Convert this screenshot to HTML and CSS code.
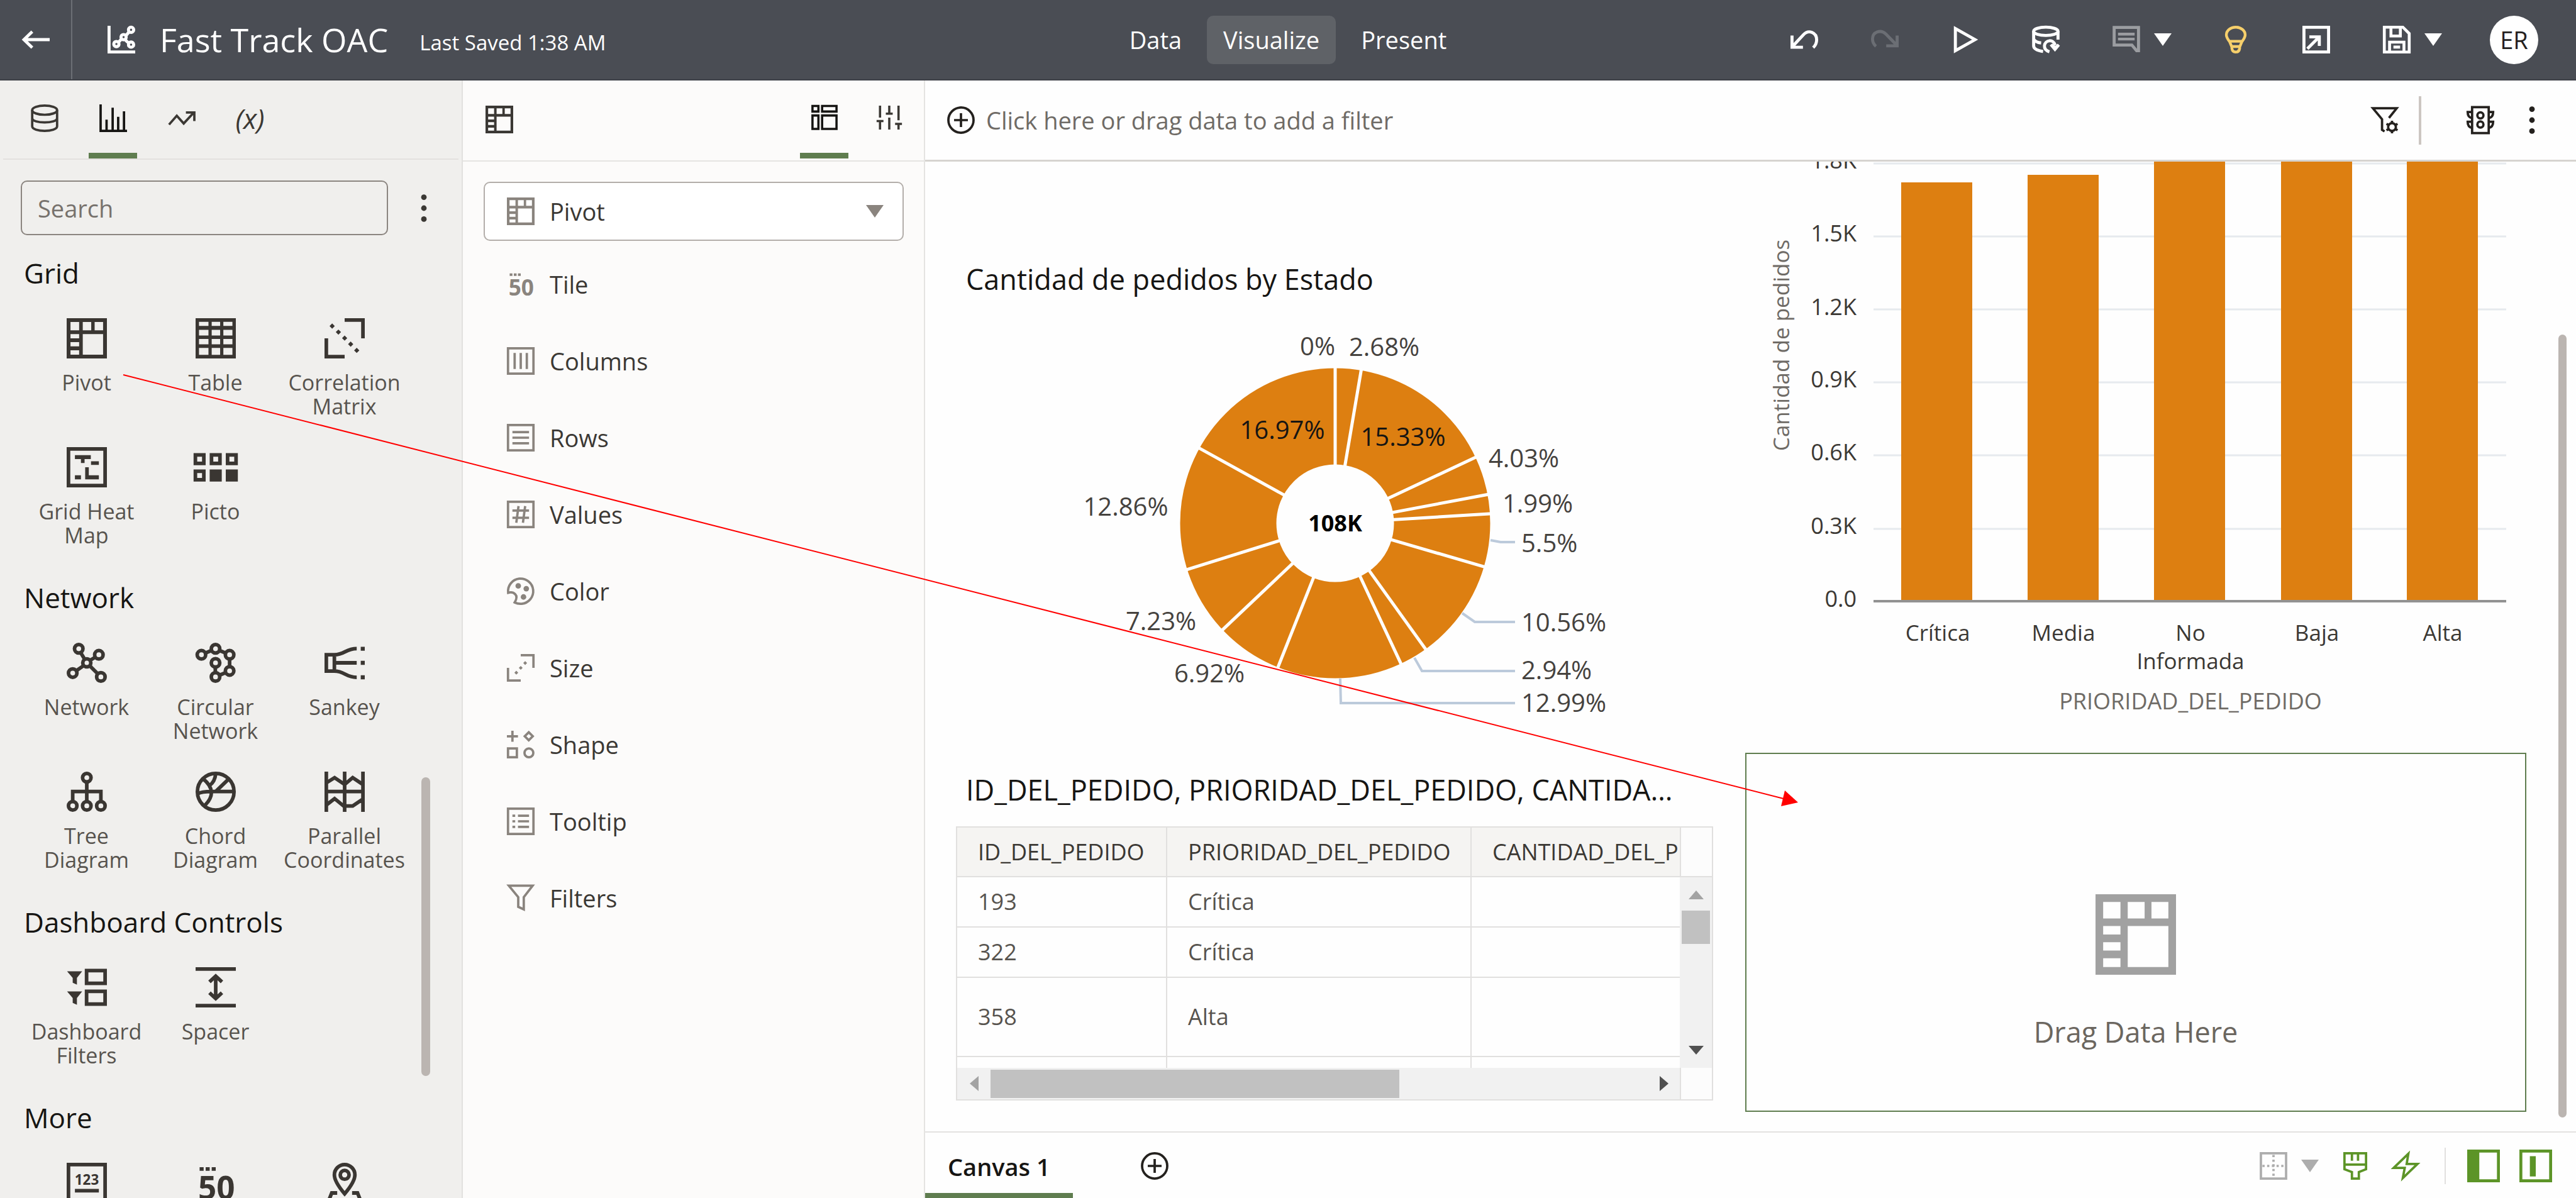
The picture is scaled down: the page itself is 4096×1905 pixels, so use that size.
FILE: index.html
```html
<!DOCTYPE html>
<html lang="en">
<head>
<meta charset="utf-8">
<title>Fast Track OAC</title>
<link rel="stylesheet" href="styles.css">
</head>
<body>

<svg class="defs" aria-hidden="true">
  <symbol id="pivot" viewBox="0 0 20 20"><path class="f" fill-rule="evenodd" d="M0 0H20V20H0ZM1.9 1.9V6H6.2V1.9ZM8 1.9V6H12.2V1.9ZM13.9 1.9V6H18.1V1.9ZM1.9 7.9V10H6.2V7.9ZM1.9 11.9V14H6.2V11.9ZM1.9 15.9V18.1H6.2V15.9ZM8 7.9V18.1H18.1V7.9Z"/></symbol>
  <symbol id="table" viewBox="0 0 20 20"><path class="f" fill-rule="evenodd" d="M0 0H20V20H0ZM1.7 1.8V3.8H6.4V1.8ZM8 1.8V3.8H12.2V1.8ZM13.8 1.8V3.8H18.3V1.8ZM1.7 5.8V8.6H6.4V5.8ZM8 5.8V8.6H12.2V5.8ZM13.8 5.8V8.6H18.3V5.8ZM1.7 10.3V13H6.4V10.3ZM8 10.3V13H12.2V10.3ZM13.8 10.3V13H18.3V10.3ZM1.7 14.8V18.2H6.4V14.8ZM8 14.8V18.2H12.2V14.8ZM13.8 14.8V18.2H18.3V14.8Z"/></symbol>
  <symbol id="correlation" viewBox="0 0 20 20"><path d="M10 .9H19.1V10M.9 10V19.1H10"/><path class="f" d="M3.8 2.6 5.1 3.9 3.8 5.2 2.5 3.9ZM6.9 5.6 8.2 6.9 6.9 8.2 5.6 6.9ZM10 8.6 11.3 9.9 10 11.2 8.7 9.9ZM13 11.6 14.3 12.9 13 14.2 11.7 12.9ZM16 14.7 17.3 16 16 17.3 14.7 16Z"/></symbol>
  <symbol id="heat" viewBox="0 0 20 20"><path d="M.9.9H19.1V19.1H.9Z"/><path class="f" d="M4.1 4H12V5.9H8.9V7.9H7.1V5.9H4.1ZM12.1 7H16V8.8H12.1ZM9.2 10H11V14H16V16H9.2ZM4.1 14H7.1V16H4.1Z"/></symbol>
  <symbol id="picto" viewBox="0 0 20 20"><path d="M-.1 3.9H4.1V8.1H-.1ZM7.9 3.9H12.1V8.1H7.9ZM15.9 3.9H20.1V8.1H15.9ZM-.1 12H4.1V16.2H-.1Z"/><path class="f" d="M7 11.1H13V17.1H7ZM15 11.1H21V17.1H15Z"/></symbol>
  <symbol id="network" viewBox="0 0 20 20"><path d="M7 5 9 8.3M14 7.3 11.6 8.8M8.4 11.4 5 13.8M11.4 11.4 15.4 15.4"/><circle cx="6" cy="3" r="2.1"/><circle cx="16" cy="6" r="2.1"/><circle cx="10" cy="10" r="2"/><circle cx="3" cy="15.1" r="2.1"/><circle cx="17" cy="17" r="2.1"/></symbol>
  <symbol id="circular" viewBox="0 0 20 20"><path d="M4.9 5.1 7.8 3.9M12 3.9 14.9 5.1M16.9 8.1V11.9M14.9 14.9 12 16.1M9.8 12.1V14.9"/><circle cx="2.9" cy="6" r="2.1"/><circle cx="9.9" cy="3" r="2.1"/><circle cx="16.9" cy="6" r="2.1"/><circle cx="16.9" cy="14" r="2.1"/><circle cx="9.9" cy="17" r="2.1"/><circle cx="9.9" cy="10" r="2.1"/></symbol>
  <symbol id="sankey" viewBox="0 0 20 20"><path d="M.9 6H4.9V14.1H.9ZM4.9 6C10 6 10.5 2.9 16 2.9M4.9 10H16M4.9 14.1C10 14.1 10.5 17.2 16 17.2"/><path class="f" d="M18 2H20V4H18ZM18 9H20V11H18ZM18 16.2H20V18.2H18Z"/></symbol>
  <symbol id="tree" viewBox="0 0 20 20"><path d="M10 5V15M3 15V9.9H17V15"/><circle cx="10" cy="3" r="2.1"/><circle cx="3" cy="17" r="2.1"/><circle cx="10" cy="17" r="2.1"/><circle cx="17" cy="17" r="2.1"/></symbol>
  <symbol id="chord" viewBox="0 0 20 20"><circle cx="10" cy="10" r="9.1"/><path d="M3.8 3.6Q11.5 10 4.6 16.8M10 1Q9.6 5 7 6.8M1 11Q3 9.9 8 9.9H19M10 9.9 16.4 3.7"/></symbol>
  <symbol id="parallel" viewBox="0 0 20 20"><path d="M.9 0V20M10 0V20M19.1 0V20M.9 5.6 5 3 10 6.4 14 3 19.1 6.4M.9 9.9H19.1M.9 16.6 5 13.4 9.5 17.1H14L19.1 13.6"/></symbol>
  <symbol id="dashfilter" viewBox="0 0 20 20"><path class="f" d="M.2 2H7.7L5.1 5.3V8.7L3 7.7V5.3ZM.2 12H7.7L5.1 15.3V18.7L3 17.7V15.3Z"/><path d="M9.9 1.7H19.1V8H9.9ZM9.9 12H19.1V18.3H9.9Z"/></symbol>
  <symbol id="spacer" viewBox="0 0 20 20"><path d="M0 .9H20M0 19.1H20M10 4.6V15.4M6.9 7.3 10 4.4 13.1 7.3M6.9 12.7 10 15.6 13.1 12.7"/></symbol>
  <symbol id="card" viewBox="0 0 20 20"><path d="M.9.9H19.1V19.1H.9ZM4.1 13.9H16"/><text class="glyph" x="10" y="11" font-size="7" text-anchor="middle">123</text></symbol>
  <symbol id="fifty" viewBox="0 0 20 20"><path class="f" d="M2 2.2H4V4H2ZM5 2.2H7V4H5ZM8 2.2H10V4H8Z"/><text class="glyph" x="10.4" y="18" font-size="16" text-anchor="middle">50</text></symbol>
  <symbol id="map" viewBox="0 0 20 20"><path d="M10 15.4Q4.9 9.4 4.9 6A5.1 5.1 0 0 1 15.1 6Q15.1 9.4 10 15.4ZM6.3 15H3.6L1.2 21M13.7 15H16.4L18.8 21"/><circle cx="10" cy="6" r="2.2"/></symbol>
  <symbol id="columns" viewBox="0 0 20 20"><path d="M.8.8H19.2V19.2H.8ZM5.6 4.2V15.8M10 4.2V15.8M14.4 4.2V15.8"/></symbol>
  <symbol id="rows" viewBox="0 0 20 20"><path d="M.8.8H19.2V19.2H.8ZM4 6H16M4 10H16M4 14H16"/></symbol>
  <symbol id="values" viewBox="0 0 20 20"><path d="M.8.8H19.2V19.2H.8ZM4 7.2H16M4 12.4H16M8.4 4 6.8 16M13.2 4 11.6 16"/></symbol>
  <symbol id="color" viewBox="0 0 20 20"><path d="M5.6 18.2Q8 19.4 10.8 19.1A9.1 9.1 0 1 0 .9 11.2Q4 10.2 6 12.2T5.6 18.2Z"/><circle class="f" cx="8.2" cy="6.2" r="2"/><circle class="f" cx="14" cy="8.2" r="2"/><circle class="f" cx="12" cy="14.2" r="2"/></symbol>
  <symbol id="size" viewBox="0 0 20 20"><path d="M10 .8H19.2V10M.8 10V19.2H10"/><path class="f" d="M13.2 5.1 14.6 6.5 13.2 7.9 11.8 6.5ZM10 8.6 11.4 10 10 11.4 8.6 10ZM6.8 12.1 8.2 13.5 6.8 14.9 5.4 13.5Z"/></symbol>
  <symbol id="shape" viewBox="0 0 20 20"><path d="M4 0V8M0 4H8M15.8 1.1 18.7 4 15.8 6.9 12.9 4ZM.8 12.8H7.2V19.2H.8Z"/><circle cx="15.9" cy="16" r="3.2"/></symbol>
  <symbol id="tooltip" viewBox="0 0 20 20"><path d="M.8.8H19.2V19.2H.8ZM8 6H16M8 10H16M8 14H16M4 6H6M4 10H6M4 14H6"/></symbol>
  <symbol id="funnel" viewBox="0 0 20 20"><path d="M1.4 1.1H18.6L12.2 9.4V18.2L8.2 16.4V9.4Z"/></symbol>
  <symbol id="db" viewBox="0 0 20 20"><ellipse cx="10" cy="4.2" rx="9" ry="3.3"/><path d="M1 4.2V15.8C1 20.2 19 20.2 19 15.8V4.2M1 10C1 14 19 14 19 10"/></symbol>
  <symbol id="bars" viewBox="0 0 20 20"><path d="M.9 0V19.1H20M5.2 11V19M9.6 2.4V19M13.6 9V19M17.8 5V19"/></symbol>
  <symbol id="trend" viewBox="0 0 20 20"><path d="M.8 14.6 6.4 8.2 11.4 13.8 18.6 6M13 5.8H19.1V12"/></symbol>
  <symbol id="grammar" viewBox="0 0 20 20"><path d="M.9 1.2H5.4V5.4H.9ZM8.2 1.2H19.1V5.4H8.2ZM.9 8.4H5.4V18.6H.9ZM8.2 8.4H19.1V18.6H8.2Z"/></symbol>
  <symbol id="sliders" viewBox="0 0 20 20"><path d="M3 1V10M3 13V19M.4 12.6H5.6M10 1V7M10 10V19M7.4 7H12.6M17 1V12M17 15V19M14.4 14.8H19.6"/></symbol>
  <symbol id="plus" viewBox="0 0 20 20"><circle cx="10" cy="10" r="9.1"/><path d="M10 5V15M5 10H15"/></symbol>
  <symbol id="dots" viewBox="0 0 20 20"><circle class="f" cx="10" cy="2.1" r="2"/><circle class="f" cx="10" cy="10" r="2"/><circle class="f" cx="10" cy="17.9" r="2"/></symbol>
  <symbol id="caret" viewBox="0 0 28 20"><path class="f" d="M0 0H28L14 20Z"/></symbol>
  <symbol id="back" viewBox="0 0 20 20"><path d="M20 10H1.6M7.4 4.2 1.4 10 7.4 15.8"/></symbol>
  <symbol id="scatter" viewBox="0 0 20 20"><path d="M1.1 0V18.9H20M8.2 11.6 9.8 9.8M13.4 7 15.4 4.6M13 10.4 15.4 12.6"/><circle cx="6.4" cy="13.2" r="1.9"/><circle cx="11.6" cy="8.2" r="1.9"/><circle cx="17" cy="2.9" r="1.9"/><circle cx="17" cy="13.6" r="1.9"/></symbol>
  <symbol id="undo" viewBox="0 0 20 20"><path d="M1.1 7V15.5H9M1.4 15 9.4 6.4C13 2.6 18.9 4.6 18.9 10.2Q18.9 13.4 16.4 15.8"/></symbol>
  <symbol id="redo" viewBox="0 0 20 20"><path d="M18.9 7V14.5H11M18.6 14 10.6 5.8C7 2.4 1.1 4.4 1.1 9.6Q1.1 12.8 3.6 14.8"/></symbol>
  <symbol id="play" viewBox="0 0 20 20"><path d="M2.8 2V18L17 10Z"/></symbol>
  <symbol id="refresh" viewBox="0 0 20 20"><ellipse cx="10" cy="4" rx="8.8" ry="3"/><path d="M1.2 4V14.6C1.2 17 4 18 8 18.6M18.8 4V10M1.2 9.6Q2.4 12 6.6 12.4M12.6 18.8Q8.8 17.6 9 14.4C9.4 10.2 15.4 9.2 16.8 14"/><path class="f" d="M12.8 14.2 14.6 12.8 16.8 14.4 18.6 13 20.2 14.4 16.6 18.8Z"/></symbol>
  <symbol id="comment" viewBox="0 0 20 20"><path d="M1.2 1.2H18.8V18L17.4 18 14 13.9H1.2Z"/><path stroke-width="2" d="M4 6H16M4 9.6H16"/></symbol>
  <symbol id="bulb" viewBox="0 0 20 20"><path stroke-width="2" d="M5.6 11.6Q3.2 8.4 3.2 6.6A6.8 5.6 0 0 1 16.8 6.6Q16.8 8.4 14.4 11.6L12.8 15.4V16.4Q12.4 19 10 19T7.2 16.4V15.4ZM5.4 11.2H14.6M7 15H13"/></symbol>
  <symbol id="export" viewBox="0 0 20 20"><path d="M1.1 1.1H18.9V18.9H1.1ZM3.6 16.6 12 8.2M5 8H12.2V14.6"/></symbol>
  <symbol id="save" viewBox="0 0 20 20"><path stroke-width="2.1" d="M1 1H14.4L19 5.6V19H1ZM5.8 1V7.4H12.6V1M4.8 19V11.8H15.2V19M7.6 15.4H12.4"/></symbol>
  <symbol id="funnelgear" viewBox="0 0 20 20"><path d="M13 8.4 18.6 1.4H1.4L8 9.4V17L9.8 18.2"/><circle cx="15.2" cy="15" r="2.8"/><path d="M15.2 10.4V12M15.2 18V19.6M11.2 12.7 12.6 13.5M17.8 16.5 19.2 17.3M11.2 17.3 12.6 16.5M17.8 13.5 19.2 12.7"/></symbol>
  <symbol id="traffic" viewBox="0 0 20 20"><path d="M4 .6H16V19.4H4Z"/><circle cx="10" cy="6.6" r="2.2"/><circle cx="10" cy="13.2" r="2.2"/><path d="M4 4.2H.8Q.8 8 4 8.6M4 11.2H.8Q.8 15 4 15.6M16 4.2H19.2Q19.2 8 16 8.6M16 11.2H19.2Q19.2 15 16 15.6"/></symbol>
  <symbol id="layout" viewBox="0 0 20 20"><path d="M.9.9H19.1V19.1H.9Z"/><path stroke-dasharray="1.6 1.8" d="M10 2V18M2 10H18"/></symbol>
  <symbol id="brush" viewBox="0 0 20 20"><path d="M2.2.9H17.8V12.4L12.6 14.4V19.1H7.6V14.4L2.2 12.4ZM2.2 9H17.8M7.6 1V6.2M12 1V6.2"/></symbol>
  <symbol id="bolt" viewBox="0 0 20 20"><path d="M12 1.2 1.4 11.4H9.4L8 18.8 18.6 8.6H10.8Z"/></symbol>
  <symbol id="leftpane" viewBox="0 0 20 20"><path class="f" fill-rule="evenodd" d="M0 0H20V20H0ZM7.4 1.8V18.2H18.2V1.8Z"/></symbol>
  <symbol id="midpane" viewBox="0 0 20 20"><path class="f" fill-rule="evenodd" d="M0 0H20V20H0ZM1.8 1.8V18.2H18.2V1.8ZM6.4 4H10V16.4H6.4Z"/></symbol>
</svg>

<header class="topbar">
  <div class="brand">
    <button class="back" aria-label="Back"><svg class="ic"><use href="#back"/></svg></button>
    <svg class="ic"><use href="#scatter"/></svg>
    <h1>Fast Track OAC</h1>
    <span class="saved">Last Saved 1:38 AM</span>
  </div>
  <nav class="modes">
    <button>Data</button>
    <button class="on">Visualize</button>
    <button>Present</button>
  </nav>
  <div class="actions">
    <button aria-label="Undo"><svg class="ic"><use href="#undo"/></svg></button>
    <button class="off" aria-label="Redo"><svg class="ic"><use href="#redo"/></svg></button>
    <button aria-label="Preview"><svg class="ic"><use href="#play"/></svg></button>
    <button aria-label="Refresh data"><svg class="ic"><use href="#refresh"/></svg></button>
    <div class="split">
      <button class="dim" aria-label="Comments"><svg class="ic"><use href="#comment"/></svg></button>
      <button class="drop" aria-label="Comment options"><svg class="caret"><use href="#caret"/></svg></button>
    </div>
    <button class="gold" aria-label="Insights"><svg class="ic"><use href="#bulb"/></svg></button>
    <button aria-label="Export"><svg class="ic"><use href="#export"/></svg></button>
    <div class="split">
      <button aria-label="Save"><svg class="ic"><use href="#save"/></svg></button>
      <button class="drop" aria-label="Save options"><svg class="caret"><use href="#caret"/></svg></button>
    </div>
    <button class="avatar">ER</button>
  </div>
</header>

<div class="work">
  <aside class="library">
    <div class="tabs">
      <button aria-label="Data"><svg class="ic"><use href="#db"/></svg></button>
      <button class="on" aria-label="Visualizations"><svg class="ic"><use href="#bars"/></svg></button>
      <button aria-label="Analytics"><svg class="ic"><use href="#trend"/></svg></button>
      <button class="fx">(x)</button>
    </div>
    <div class="find">
      <input type="text" placeholder="Search" aria-label="Search">
      <button aria-label="More options"><svg class="ic"><use href="#dots"/></svg></button>
    </div>
    <div class="shelves">
      <h2>Grid</h2>
      <div class="tiles">
        <button><svg class="ic"><use href="#pivot"/></svg><span>Pivot</span></button>
        <button><svg class="ic"><use href="#table"/></svg><span>Table</span></button>
        <button><svg class="ic"><use href="#correlation"/></svg><span>Correlation Matrix</span></button>
        <button><svg class="ic"><use href="#heat"/></svg><span>Grid Heat Map</span></button>
        <button><svg class="ic"><use href="#picto"/></svg><span>Picto</span></button>
      </div>
      <h2>Network</h2>
      <div class="tiles">
        <button><svg class="ic"><use href="#network"/></svg><span>Network</span></button>
        <button><svg class="ic"><use href="#circular"/></svg><span>Circular Network</span></button>
        <button><svg class="ic"><use href="#sankey"/></svg><span>Sankey</span></button>
        <button><svg class="ic"><use href="#tree"/></svg><span>Tree Diagram</span></button>
        <button><svg class="ic"><use href="#chord"/></svg><span>Chord Diagram</span></button>
        <button><svg class="ic"><use href="#parallel"/></svg><span>Parallel Coordinates</span></button>
      </div>
      <h2>Dashboard Controls</h2>
      <div class="tiles">
        <button><svg class="ic"><use href="#dashfilter"/></svg><span>Dashboard Filters</span></button>
        <button><svg class="ic"><use href="#spacer"/></svg><span>Spacer</span></button>
      </div>
      <h2>More</h2>
      <div class="tiles">
        <button aria-label="Card"><svg class="ic"><use href="#card"/></svg></button>
        <button aria-label="Tile"><svg class="ic"><use href="#fifty"/></svg></button>
        <button aria-label="Map"><svg class="ic"><use href="#map"/></svg></button>
      </div>
    </div>
    <div class="library-thumb"></div>
  </aside>

  <aside class="grammar">
    <div class="grammar-head">
      <svg class="ic"><use href="#pivot"/></svg>
      <div class="tabs">
        <button class="on" aria-label="Grammar"><svg class="ic"><use href="#grammar"/></svg></button>
        <button aria-label="Properties"><svg class="ic"><use href="#sliders"/></svg></button>
      </div>
    </div>
    <div class="picker">
      <svg class="ic"><use href="#pivot"/></svg>
      <select aria-label="Visualization type"><option>Pivot</option></select>
      <svg class="caret"><use href="#caret"/></svg>
    </div>
    <ul class="slots">
      <li><svg class="ic"><use href="#fifty"/></svg>Tile</li>
      <li><svg class="ic"><use href="#columns"/></svg>Columns</li>
      <li><svg class="ic"><use href="#rows"/></svg>Rows</li>
      <li><svg class="ic"><use href="#values"/></svg>Values</li>
      <li><svg class="ic"><use href="#color"/></svg>Color</li>
      <li><svg class="ic"><use href="#size"/></svg>Size</li>
      <li><svg class="ic"><use href="#shape"/></svg>Shape</li>
      <li><svg class="ic"><use href="#tooltip"/></svg>Tooltip</li>
      <li><svg class="ic"><use href="#funnel"/></svg>Filters</li>
    </ul>
  </aside>

  <main class="stage">
    <div class="filterbar">
      <button class="add-filter"><svg class="ic"><use href="#plus"/></svg>Click here or drag data to add a filter</button>
      <div class="filter-tools">
        <button aria-label="Filter settings"><svg class="ic"><use href="#funnelgear"/></svg></button>
        <span class="rule"></span>
        <button aria-label="Brushing"><svg class="ic"><use href="#traffic"/></svg></button>
        <button aria-label="More"><svg class="ic"><use href="#dots"/></svg></button>
      </div>
    </div>

    <div class="canvas">
      <section class="donut">
        <h2>Cantidad de pedidos by Estado</h2>
        <svg viewBox="1520 474 1204 723" preserveAspectRatio="xMinYMin meet" role="img" aria-label="Cantidad de pedidos by Estado">
          <circle cx="2123" cy="832" r="170" fill="none" stroke="#dd7f11" stroke-width="153"/>
          <g stroke="#fff" stroke-width="5" transform="translate(2123 832)">
            <path d="M0-90V-250"/>
            <path d="M0-90V-250" transform="rotate(9.65)"/>
            <path d="M0-90V-250" transform="rotate(64.84)"/>
            <path d="M0-90V-250" transform="rotate(79.34)"/>
            <path d="M0-90V-250" transform="rotate(86.51)"/>
            <path d="M0-90V-250" transform="rotate(106.31)"/>
            <path d="M0-90V-250" transform="rotate(144.32)"/>
            <path d="M0-90V-250" transform="rotate(154.91)"/>
            <path d="M0-90V-250" transform="rotate(201.67)"/>
            <path d="M0-90V-250" transform="rotate(226.58)"/>
            <path d="M0-90V-250" transform="rotate(252.61)"/>
            <path d="M0-90V-250" transform="rotate(298.91)"/>
          </g>
          <g fill="none" stroke="#bccadb" stroke-width="4">
            <path d="M2370 859 2386 862H2409"/>
            <path d="M2325 975 2345 989H2409"/>
            <path d="M2249 1046 2261 1067H2409"/>
            <path d="M2131 1079 2132 1118H2409"/>
          </g>
          <g class="pct">
            <text x="2095" y="565" text-anchor="middle">0%</text>
            <text x="2201" y="566" text-anchor="middle">2.68%</text>
            <text x="2423" y="743" text-anchor="middle">4.03%</text>
            <text x="2445" y="815" text-anchor="middle">1.99%</text>
            <text x="2419" y="878">5.5%</text>
            <text x="2419" y="1004">10.56%</text>
            <text x="2419" y="1080">2.94%</text>
            <text x="2419" y="1132">12.99%</text>
            <text x="1923" y="1085" text-anchor="middle">6.92%</text>
            <text x="1846" y="1002" text-anchor="middle">7.23%</text>
            <text x="1790" y="820" text-anchor="middle">12.86%</text>
            <text class="in" x="2039" y="698" text-anchor="middle">16.97%</text>
            <text class="in" x="2231" y="709" text-anchor="middle">15.33%</text>
            <text class="total" x="2123" y="845" text-anchor="middle">108K</text>
          </g>
        </svg>
      </section>

      <section class="columns-chart">
        <svg viewBox="2775 257 1242 940" preserveAspectRatio="xMinYMin meet" role="img" aria-label="Cantidad de pedidos by PRIORIDAD_DEL_PEDIDO">
          <path stroke="#e6eaee" stroke-width="3" d="M2979 260H3985M2979 376H3985M2979 492H3985M2979 608H3985M2979 724H3985M2979 841H3985"/>
          <path fill="#dd7f11" d="M3023 290H3136V955H3023ZM3224 278H3337V955H3224ZM3425 200H3538V955H3425ZM3627 200H3740V955H3627ZM3827 200H3940V955H3827Z"/>
          <path stroke="#929292" stroke-width="4" d="M2979 956H3985"/>
          <g class="tick" text-anchor="end">
            <text x="2952" y="268">1.8K</text>
            <text x="2952" y="384">1.5K</text>
            <text x="2952" y="501">1.2K</text>
            <text x="2952" y="616">0.9K</text>
            <text x="2952" y="732">0.6K</text>
            <text x="2952" y="849">0.3K</text>
            <text x="2952" y="965">0.0</text>
          </g>
          <g class="cat" text-anchor="middle">
            <text x="3081" y="1019">Crítica</text>
            <text x="3281" y="1019">Media</text>
            <text x="3483" y="1019">No</text>
            <text x="3483" y="1064">Informada</text>
            <text x="3684" y="1019">Baja</text>
            <text x="3884" y="1019">Alta</text>
          </g>
          <text class="axis wide" x="3483" y="1128" text-anchor="middle">PRIORIDAD_DEL_PEDIDO</text>
          <text class="axis" transform="translate(2845 549) rotate(-90)" text-anchor="middle">Cantidad de pedidos</text>
        </svg>
      </section>

      <section class="listing">
        <h2>ID_DEL_PEDIDO, PRIORIDAD_DEL_PEDIDO, CANTIDAD_DEL_PEDIDO</h2>
        <div class="grid-frame">
          <div class="grid-view">
            <table>
              <thead><tr><th class="c1">ID_DEL_PEDIDO</th><th class="c2">PRIORIDAD_DEL_PEDIDO</th><th class="c3">CANTIDAD_DEL_PEDIDO</th></tr></thead>
              <tbody>
                <tr><td>193</td><td>Crítica</td><td></td></tr>
                <tr><td>322</td><td>Crítica</td><td></td></tr>
                <tr class="tall"><td>358</td><td>Alta</td><td></td></tr>
                <tr><td></td><td></td><td></td></tr>
              </tbody>
            </table>
          </div>
          <div class="corner top"></div>
          <div class="vbar">
            <svg class="arrow faint" viewBox="0 0 24 14"><path d="M12 0 24 14H0Z"/></svg>
            <div class="vthumb"></div>
            <svg class="arrow last" viewBox="0 0 24 14"><path d="M0 0H24L12 14Z"/></svg>
          </div>
          <div class="hbar">
            <svg class="arrow side faint" viewBox="0 0 14 24"><path d="M14 0V24L0 12Z"/></svg>
            <div class="hthumb"></div>
            <svg class="arrow side end" viewBox="0 0 14 24"><path d="M0 0V24L14 12Z"/></svg>
          </div>
          <div class="corner"></div>
        </div>
      </section>

      <section class="dropzone">
        <svg class="ic"><use href="#pivot"/></svg>
        <p>Drag Data Here</p>
      </section>
      <div class="canvas-thumb"></div>
    </div>

    <footer class="sheetbar">
      <button class="sheet">Canvas 1</button>
      <button class="add-sheet" aria-label="Add canvas"><svg class="ic"><use href="#plus"/></svg></button>
      <div class="sheet-tools">
        <button class="mute" aria-label="Layout"><svg class="ic"><use href="#layout"/></svg></button>
        <button class="mute" aria-label="Layout options"><svg class="caret"><use href="#caret"/></svg></button>
        <button aria-label="Theme"><svg class="ic"><use href="#brush"/></svg></button>
        <button aria-label="Auto apply"><svg class="ic"><use href="#bolt"/></svg></button>
        <span class="rule"></span>
        <button class="pane" aria-label="Data panel"><svg class="ic"><use href="#leftpane"/></svg></button>
        <button class="pane" aria-label="Grammar panel"><svg class="ic"><use href="#midpane"/></svg></button>
      </div>
    </footer>
  </main>
</div>

<svg class="pointer" aria-hidden="true">
  <path d="M196 596 2836 1270" stroke="#f00" stroke-width="2"/>
  <path d="M2859 1276 2838 1257 2832 1282Z" fill="#f00"/>
</svg>

</body>
</html>
```

FILE: styles.css
```css
* { box-sizing: border-box; }

body {
  margin: 0;
  height: 100vh;
  display: flex;
  flex-direction: column;
  overflow: hidden;
  position: relative;
  background: #fff;
  color: #3b3834;
  font: 38px/52px "Open Sans", "Noto Sans", sans-serif;
}

h1, h2, p, ul { margin: 0; padding: 0; font-weight: 400; }

button {
  margin: 0;
  padding: 0;
  border: 0;
  background: none;
  color: inherit;
  font: inherit;
  display: flex;
  align-items: center;
  justify-content: center;
}

.defs { display: none; }
symbol, svg { overflow: visible; }

.ic {
  display: block;
  flex: none;
  width: 44px;
  height: 44px;
  fill: none;
  stroke: currentColor;
  stroke-width: 1.7;
}
.f { fill: currentColor; stroke: none; }
.glyph { fill: currentColor; stroke: none; font-weight: 700; }
.caret { display: block; flex: none; width: 28px; height: 20px; }

/* top bar */
.topbar {
  flex: none;
  height: 128px;
  display: grid;
  grid-template-columns: 1fr auto 1fr;
  align-items: center;
  background: #4a4d54;
  border-bottom: 2px solid #3d4047;
  color: #fff;
}
.topbar .ic { stroke-width: 2.2; }
.brand { display: flex; align-items: center; height: 126px; white-space: nowrap; }
.back { width: 115px; height: 126px; border-right: 2px solid #6c6f75; margin-right: 56px; }
.brand h1 { margin-left: 39px; font-size: 52px; line-height: 70px; }
.saved { margin-left: 50px; padding-top: 10px; font-size: 33px; line-height: 44px; }
.modes { display: flex; gap: 14px; }
.modes button { height: 77px; padding: 0 26px; border-radius: 10px; }
.modes .on { background: #5f6267; }
.actions { display: flex; align-items: center; justify-content: flex-end; gap: 76px; padding-right: 60px; }
.actions button { width: 52px; height: 52px; }
.actions .split { display: flex; align-items: center; gap: 18px; }
.actions .drop { width: 28px; }
.actions .off { color: #6b6e74; }
.actions .dim { color: #9b9da1; }
.actions .gold { color: #f6cf6b; }
.actions .avatar { width: 77px; height: 77px; border-radius: 50%; background: #fff; color: #24211e; }

.work { flex: 1; min-height: 0; display: flex; }

/* visualization library */
.library {
  flex: none;
  width: 736px;
  position: relative;
  overflow: hidden;
  background: #f0efed;
  border-right: 2px solid #e2e1df;
}
.tabs { display: flex; gap: 32px; }
.tabs button { width: 77px; height: 124px; padding-top: 4px; border-bottom: 9px solid transparent; }
.tabs .on { border-bottom-color: #5f7d4f; color: #161513; }
.library .tabs { margin: 0 5px; padding-left: 27px; height: 126px; border-bottom: 2px solid #e3e1df; }
.library .tabs .fx { font-size: 44px; font-style: italic; }
.find { display: flex; align-items: center; padding: 33px 38px 30px 33px; }
.find input {
  flex: 1;
  min-width: 0;
  height: 87px;
  padding: 0 25px;
  border: 2px solid #8b8580;
  border-radius: 10px;
  background: transparent;
  color: inherit;
  font: inherit;
}
.find input::placeholder { color: #77726d; opacity: 1; }
.find button { margin-left: 35px; }
.shelves h2 { margin: 0 0 42px; padding-left: 38px; font-size: 44px; line-height: 60px; color: #161513; }
.tiles {
  display: grid;
  grid-template-columns: repeat(3, 205px);
  grid-auto-rows: 205px;
  padding: 0 0 4px 35px;
}
.tiles button {
  flex-direction: column;
  justify-content: flex-start;
  gap: 19px;
  font-size: 34px;
  line-height: 38px;
  color: #57534e;
}
.tiles .ic { width: 64px; height: 64px; color: #3a3632; stroke-width: 1.8; }
.library-thumb {
  position: absolute;
  right: 50px;
  bottom: 194px;
  width: 14px;
  height: 475px;
  border-radius: 7px;
  background: #bbb5b1;
}

/* grammar panel */
.grammar { flex: none; width: 735px; background: #fcfbfa; border-right: 2px solid #e5e4e2; }
.grammar-head {
  display: flex;
  align-items: center;
  justify-content: space-between;
  height: 129px;
  padding: 0 17px 3px 36px;
  border-bottom: 2px solid #e5e4e2;
}
.grammar-head .tabs { gap: 26px; align-self: flex-start; }
.grammar-head .tabs button { padding-top: 2px; }
.grammar-head .tabs .ic { width: 42px; height: 42px; }
.picker {
  position: relative;
  display: flex;
  align-items: center;
  height: 94px;
  margin: 32px 32px 8px 33px;
  border: 2px solid #b3aeaa;
  border-radius: 10px;
  background: #fff;
  color: #8a847e;
}
.picker .ic { position: absolute; left: 35px; pointer-events: none; }
.picker .caret { position: absolute; right: 30px; pointer-events: none; }
.picker select {
  flex: 1;
  height: 90px;
  padding: 0 0 0 103px;
  appearance: none;
  border: 0;
  border-radius: 10px;
  background: transparent;
  color: #3b3834;
  font: inherit;
}
.slots { list-style: none; }
.slots li { display: flex; align-items: center; gap: 24px; height: 122px; padding-left: 70px; }
.slots .ic { color: #8a847e; }

/* stage */
.stage { flex: 1; min-width: 0; display: flex; flex-direction: column; background: #fefefe; }
.filterbar {
  flex: none;
  display: flex;
  align-items: center;
  justify-content: space-between;
  height: 129px;
  padding: 0 48px 0 35px;
  border-bottom: 3px solid #d6d4d0;
}
.add-filter { gap: 18px; color: #6f6b66; }
.add-filter .ic { color: #24211e; }
.filter-tools { display: flex; align-items: center; color: #24211e; }
.filter-tools .rule { width: 4px; height: 77px; margin: 0 72px 0 32px; background: #ccc6c2; }
.filter-tools button + button { margin-left: 38px; }

.canvas {
  flex: 1;
  min-height: 0;
  position: relative;
  display: grid;
  grid-template-columns: 1204fr 1242fr;
  grid-template-rows: minmax(0, 1fr) 571px;
  column-gap: 51px;
  padding: 0 79px 31px 49px;
  overflow: hidden;
}
.canvas h2 { font-size: 45px; line-height: 60px; color: #161513; white-space: nowrap; }
.canvas section { min-width: 0; min-height: 0; }
.donut { display: flex; flex-direction: column; padding-top: 157px; }
.donut h2 { padding-left: 16px; }
.donut svg { flex: 1; min-height: 0; width: 100%; }
.columns-chart svg { display: block; width: 100%; height: 100%; }
.pct { font-size: 40px; fill: #45423e; }
.pct .in { fill: #161513; }
.pct .total { font-size: 36px; font-weight: 700; fill: #000; }
.tick { font-size: 36px; fill: #3b3834; }
.cat { font-size: 35px; fill: #3b3834; }
.axis { font-size: 35px; fill: #6f6b66; }
.wide { font-size: 36px; }

.listing { display: flex; flex-direction: column; padding: 29px 0 18px; }
.listing h2 { margin: 0 50px 28px 16px; overflow: hidden; text-overflow: ellipsis; }
.grid-frame {
  flex: 1;
  min-height: 0;
  display: grid;
  grid-template-columns: minmax(0, 1fr) 51px;
  grid-template-rows: 79px minmax(0, 1fr) 50px;
  border: 2px solid #e1e0df;
}
.grid-view { grid-column: 1; grid-row: 1 / 3; overflow: hidden; }
.grid-view table { width: 1418px; table-layout: fixed; border-collapse: separate; border-spacing: 0; font-size: 36px; line-height: 48px; }
.c1 { width: 334px; }
.c2 { width: 484px; }
.c3 { width: 600px; }
th, td { height: 80px; padding: 0 0 0 33px; text-align: left; font-weight: 400; border: solid #e1e0df; border-width: 0 2px 2px 0; }
th { height: 79px; background: #f5f4f2; white-space: nowrap; }
td { color: #57534e; }
.tall td { height: 126px; }
.corner { background: #fcfcfc; border-left: 2px solid #e1e0df; }
.corner.top { border-bottom: 2px solid #e1e0df; }
.vbar { display: flex; flex-direction: column; align-items: center; padding: 21px 0; background: #f1f1f1; }
.vthumb { width: 45px; height: 53px; margin-top: 18px; background: #c1c1c1; }
.hbar { display: flex; align-items: center; padding: 0 18px 0 20px; background: #f1f1f1; }
.hthumb { width: 650px; height: 45px; margin-left: 19px; background: #c1c1c1; }
.arrow { flex: none; width: 24px; height: 14px; fill: #505050; }
.arrow.side { width: 14px; height: 24px; }
.arrow.faint { fill: #a3a3a3; }
.arrow.last { margin-top: auto; }
.arrow.end { margin-left: auto; }

.dropzone {
  display: flex;
  flex-direction: column;
  align-items: center;
  gap: 61px;
  padding-top: 223px;
  border: 2px solid #5f7d4f;
}
.dropzone .ic { width: 128px; height: 128px; color: #a1a1a1; }
.dropzone p { font-size: 45px; line-height: 60px; color: #6b665f; }
.canvas-thumb {
  position: absolute;
  right: 15px;
  bottom: 22px;
  width: 13px;
  height: 1245px;
  border-radius: 7px;
  background: #bbb5b1;
}

/* sheet tabs */
.sheetbar { flex: none; display: flex; align-items: center; height: 106px; border-top: 2px solid #e4e2e0; }
.sheet { height: 104px; padding: 4px 36px 0; border-top: 8px solid transparent; border-bottom: 8px solid #5f7d4f; font-weight: 600; color: #161513; }
.add-sheet { margin-left: 108px; padding-top: 2px; color: #24211e; }
.sheet-tools { flex: 1; display: flex; align-items: center; justify-content: flex-end; padding: 2px 38px 0 0; color: #5c9427; }
.sheet-tools .mute { color: #adadad; margin-right: 22px; }
.sheet-tools .mute + .mute { margin-right: 36px; }
.sheet-tools button:nth-child(4) { margin: 0 40px 0 36px; }
.sheet-tools .rule { width: 2px; height: 58px; margin-right: 34px; background: #e1e0df; }
.pane .ic { width: 52px; height: 52px; }
.pane + .pane { margin-left: 31px; }

/* drag path from the library tile to the drop zone */
.pointer { position: absolute; left: 0; top: 0; width: 100%; height: 100%; pointer-events: none; }
```
